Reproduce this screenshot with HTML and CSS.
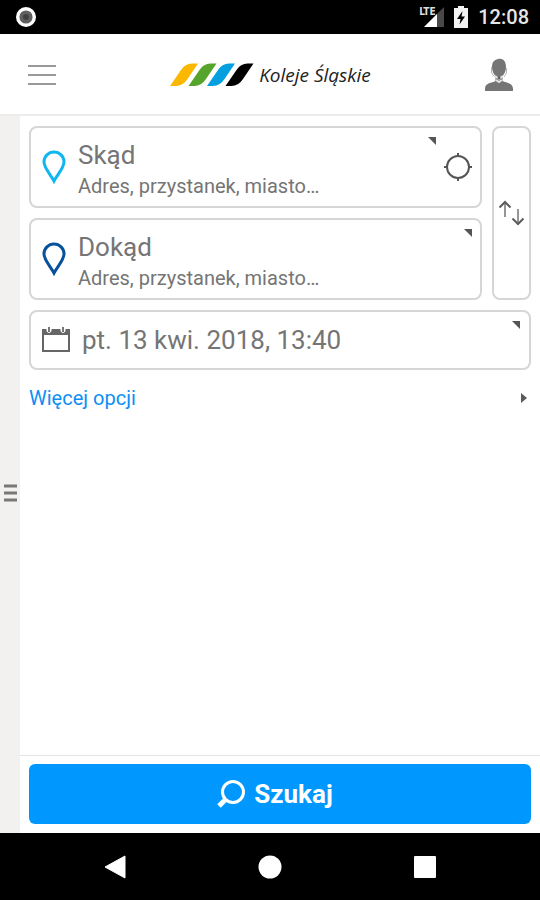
FILE: index.html
```html
<!DOCTYPE html>
<html lang="pl">
<head>
<meta charset="utf-8">
<meta name="viewport" content="width=device-width, initial-scale=1">
<title>Koleje Śląskie</title>
<link rel="stylesheet" href="styles.css">
</head>
<body>
<div class="status-bar">
  <svg class="status-dot" width="22" height="22" viewBox="0 0 22 22" aria-hidden="true">
    <circle cx="11" cy="11" r="8.300" fill="#606060" stroke="#fff" stroke-width="3.400"/>
    <circle cx="11" cy="11" r="3" fill="#404040"/>
  </svg>
  <div class="status-icons">
    <span class="signal">
      <span class="lte">LTE</span>
      <svg width="20" height="20" viewBox="0 0 20 20" aria-hidden="true">
        <path d="M20 0V20H0Z" fill="#484848"/>
        <path d="M13 7V20H0Z" fill="#fff"/>
      </svg>
    </span>
    <svg width="14" height="22" viewBox="0 0 14 22" aria-hidden="true">
      <path d="M4 0H10V2H14V22H0V2H4Z" fill="#f2f2f2"/>
      <path d="M8.500 5L3 13H6.500L5.500 18.500L11 10.500H7.500Z" fill="#000"/>
    </svg>
    <time>12:08</time>
  </div>
</div>

<header class="app-header">
  <button class="icon-button" type="button" aria-label="Menu">
    <svg width="28" height="22" viewBox="0 0 28 22"><path d="M0 2H28M0 11H28M0 20H28" stroke="#999" stroke-width="2"/></svg>
  </button>
  <a class="brand" href="#">
    <svg width="84" height="24" viewBox="0 0 84 24" aria-hidden="true">
      <path d="M0 23L11 7Q15 0.500 22 0.500H28L17.500 16Q13 23 6 23Z" fill="#fab900"/>
      <path d="M18.500 23L29.500 7Q33.500 0.500 40.500 0.500H46.500L36 16Q31.500 23 24.500 23Z" fill="#57a42c"/>
      <path d="M37 23L48 7Q52 0.500 59 0.500H65L54.500 16Q50 23 43 23Z" fill="#049fde"/>
      <path d="M55.500 23L66.500 7Q70.500 0.500 77.500 0.500H83.500L73 16Q68.500 23 61.500 23Z" fill="#000"/>
    </svg>
    <span>Koleje Śląskie</span>
  </a>
  <button class="icon-button" type="button" aria-label="Profil">
    <svg width="28" height="34" viewBox="0 0 28 34">
      <path d="M13 1C18 0 21 3 21 9C21 13 19.500 16 17.500 18V23C21 25 28 24.500 28 31V33H0V31C0 24.500 7 25 10.500 23V18C8.500 16 7 13 7 9C7 4 9 2 13 1Z" fill="#757575"/>
      <path d="M6.500 9V14Q7 18 11 19M21.500 10V15L19 19" fill="none" stroke="#b5b5b5"/>
      <path d="M10 18L14 21L18 18M11 22L14 24L17 22" fill="none" stroke="#e4e4e4" stroke-width="2"/>
      <circle cx="14" cy="20" r="1.500" fill="#606060"/>
    </svg>
  </button>
</header>

<div class="body">
  <button class="drawer" type="button" aria-label="Wysuń panel">
    <svg width="13" height="18" viewBox="0 0 13 18"><path d="M0 2H13M0 9H13M0 16H13" stroke="#777" stroke-width="3"/></svg>
  </button>
  <form class="search">
    <div class="fields">
      <div class="route">
        <div class="stops">
          <div class="card stop">
            <svg class="pin pin-from" width="24" height="34" viewBox="0 0 24 34" aria-hidden="true"><path d="M12 31C9 25 2 18 2 12A10 10 0 0 1 22 12C22 18 15 25 12 31Z"/></svg>
            <div class="stop-text">
              <label for="from">Skąd</label>
              <input id="from" type="text" placeholder="Adres, przystanek, miasto…">
            </div>
            <svg class="corner" width="8" height="8" viewBox="0 0 8 8" aria-hidden="true"><path d="M0 0H8V8Z"/></svg>
            <button class="locate" type="button" aria-label="Moja lokalizacja">
              <svg width="28" height="28" viewBox="0 0 28 28"><g fill="none" stroke="#555" stroke-width="2"><circle cx="14" cy="14" r="11"/><path d="M14 0V4M14 24V28M0 14H4M24 14H28"/></g></svg>
            </button>
          </div>
          <div class="card stop">
            <svg class="pin pin-to" width="24" height="34" viewBox="0 0 24 34" aria-hidden="true"><path d="M12 31C9 25 2 18 2 12A10 10 0 0 1 22 12C22 18 15 25 12 31Z"/></svg>
            <div class="stop-text">
              <label for="to">Dokąd</label>
              <input id="to" type="text" placeholder="Adres, przystanek, miasto…">
            </div>
            <svg class="corner" width="8" height="8" viewBox="0 0 8 8" aria-hidden="true"><path d="M0 0H8V8Z"/></svg>
          </div>
        </div>
        <button class="card swap" type="button" aria-label="Zamień">
          <svg width="26" height="26" viewBox="0 0 26 26"><g fill="none" stroke-width="2"><path d="M6 2V17M19 9V24" stroke="#969696"/><path d="M0.500 7.500L6 2L11.500 7.500M13.500 18.500L19 24L24.500 18.500" stroke="#5c5c5c"/></g></svg>
        </button>
      </div>
      <button class="card date" type="button">
        <svg width="28" height="26" viewBox="0 0 28 26" aria-hidden="true">
          <path d="M1 3H27V24H1Z" fill="#fff" stroke="#666" stroke-width="2"/>
          <path d="M0 2H28V8H0Z" fill="#666"/>
          <path d="M4.500 0V4Q7 8 9.500 4V0ZM18.500 0V4Q21 8 23.500 4V0Z" fill="#fff"/>
          <path d="M7 0V5M21 0V5" stroke="#777" stroke-width="2"/>
        </svg>
        <span>pt. 13 kwi. 2018, 13:40</span>
        <svg class="corner" width="8" height="8" viewBox="0 0 8 8" aria-hidden="true"><path d="M0 0H8V8Z"/></svg>
      </button>
      <a class="more" href="#">
        <span>Więcej opcji</span>
        <svg width="6" height="10" viewBox="0 0 6 10" aria-hidden="true"><path d="M0 0L6 5L0 10Z" fill="#5a5a5a"/></svg>
      </a>
    </div>
    <div class="actions">
      <button class="submit" type="submit">
        <svg width="28" height="28" viewBox="0 0 28 28" aria-hidden="true"><g fill="none" stroke="#fff"><circle cx="16" cy="12" r="10.500" stroke-width="3"/><path d="M9 19L2 26" stroke-width="5"/></g></svg>
        <span>Szukaj</span>
      </button>
    </div>
  </form>
</div>

<nav class="system-nav" aria-label="System">
  <button type="button" aria-label="Wstecz"><svg width="24" height="24" viewBox="0 0 24 24"><path d="M22 1V23L2 12Z" fill="#fff" stroke="#fff" stroke-linejoin="round"/></svg></button>
  <button type="button" aria-label="Ekran główny"><svg width="24" height="24" viewBox="0 0 24 24"><circle cx="12" cy="12" r="11.500" fill="#fff"/></svg></button>
  <button type="button" aria-label="Ostatnie"><svg width="24" height="24" viewBox="0 0 24 24"><rect x="1" y="1" width="22" height="22" rx="1" fill="#fff"/></svg></button>
</nav>
</body>
</html>
```
FILE: styles.css
```css
* { box-sizing: border-box; }

body {
  margin: 0;
  min-height: 100vh;
  display: flex;
  flex-direction: column;
  background: #fff;
  color: #757575;
  font-family: Roboto, "Liberation Sans", sans-serif;
}

button, input {
  margin: 0;
  padding: 0;
  border: 0;
  background: none;
  color: inherit;
  font: inherit;
}

svg { display: block; flex: none; }
a { color: inherit; text-decoration: none; }

.status-bar {
  display: flex;
  align-items: center;
  justify-content: space-between;
  height: 34px;
  padding: 0 11px 0 15px;
  background: #000;
  color: #fff;
}

.status-icons { display: flex; align-items: center; gap: 10px; }
.status-icons time { font-size: 20px; line-height: 24px; font-weight: 500; color: #e6e6e6; }
.signal { position: relative; }
.lte {
  position: absolute;
  top: -1px;
  left: -5px;
  font: 700 10px/12px "Liberation Sans Narrow", "DejaVu Sans Condensed", sans-serif;
  color: #ddd;
}

.app-header {
  display: flex;
  align-items: center;
  justify-content: space-between;
  height: 82px;
  padding: 2px 27px 0 28px;
  border-bottom: 2px solid #ececec;
}

.icon-button { display: flex; }

.brand {
  display: flex;
  align-items: center;
  gap: 5px;
  color: #222;
  font: italic 400 19px/24px "Open Sans", sans-serif;
}

.body { flex: 1; display: flex; }

.drawer {
  display: flex;
  align-items: center;
  justify-content: center;
  width: 20px;
  padding-top: 36px;
  background: #f2f1f0;
}

.search { flex: 1; min-width: 0; display: flex; flex-direction: column; }

.fields {
  flex: 1;
  display: flex;
  flex-direction: column;
  gap: 10px;
  padding: 10px 9px;
}

.route { display: flex; gap: 10px; }
.stops { flex: 1; min-width: 0; display: flex; flex-direction: column; gap: 10px; }

.card {
  border: 2px solid #d6d6d6;
  border-radius: 8px;
  background: #fff;
}

.stop {
  display: flex;
  align-items: center;
  gap: 8px;
  height: 82px;
  padding: 0 8px 0 11px;
}

.pin path { fill: none; stroke-width: 3; }
.pin-from path { stroke: #0fb6f0; }
.pin-to path { stroke: #06509c; }

.stop-text { flex: 1; min-width: 0; display: flex; flex-direction: column; padding: 4px 0 0 4px; }
.stop-text label { font-size: 26px; line-height: 34px; }
.stop-text input { width: 100%; height: 28px; font-size: 20px; outline: none; }
.stop-text input::placeholder { color: #757575; opacity: 1; }

.corner { align-self: flex-start; margin-top: 9px; fill: #555; }

.swap {
  display: flex;
  align-items: center;
  justify-content: center;
  width: 39px;
}

.date {
  display: flex;
  align-items: center;
  gap: 12px;
  height: 60px;
  padding: 0 9px 0 11px;
  font-size: 26px;
  line-height: 34px;
  text-align: left;
}
.date span { flex: 1; }

.more {
  display: flex;
  align-items: center;
  justify-content: space-between;
  height: 36px;
  padding-right: 4px;
  color: #0d90f5;
  font-size: 20px;
  line-height: 24px;
}

.actions { padding: 8px 9px 9px; border-top: 1px solid #e4e4e4; }

.submit {
  display: flex;
  align-items: center;
  justify-content: center;
  gap: 9px;
  width: 100%;
  height: 60px;
  padding-right: 10px;
  border-radius: 6px;
  background: #0098ff;
  color: #fff;
  font-size: 26px;
  line-height: 34px;
  font-weight: 700;
}

.system-nav {
  display: flex;
  align-items: center;
  justify-content: space-between;
  height: 67px;
  padding: 0 19%;
  background: #000;
}
.system-nav button { display: flex; }
```
